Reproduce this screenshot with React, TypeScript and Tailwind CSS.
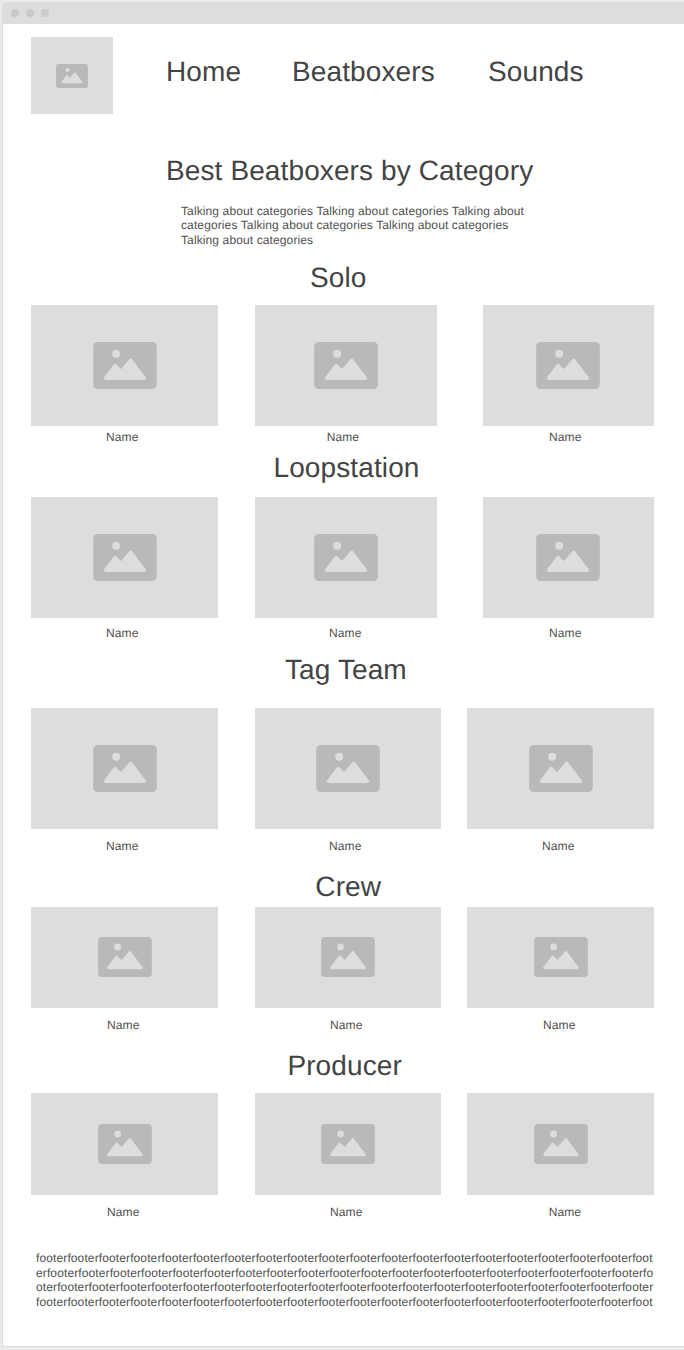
import React from "react";

type Card = { box: string; label: string; icon?: string };
type Section = {
  title: string;
  heading: string;
  row: string;
  icon: string;
  cards: Card[];
};

const sections: Section[] = [
  {
    title: "Solo",
    heading: "mt-[15px] ml-[307px]",
    row: "mt-[11px] h-[121px]",
    icon: "w-16 h-[47px]",
    cards: [
      { box: "ml-[28px] w-[187px]", label: "mt-[4px] pl-[75px]" },
      { box: "ml-[37px] w-[182px]", label: "mt-[4px] pl-[71.7px]" },
      { box: "ml-[46px] w-[171px]", label: "mt-[4px] pl-[66px]", icon: "pr-px" },
    ],
  },
  {
    title: "Loopstation",
    heading: "mt-[8px] ml-[270.5px]",
    row: "mt-[13px] h-[121px]",
    icon: "w-16 h-[47px]",
    cards: [
      { box: "ml-[28px] w-[187px]", label: "mt-[8px] pl-[75px]" },
      { box: "ml-[37px] w-[182px]", label: "mt-[8px] pl-[74px]" },
      { box: "ml-[46px] w-[171px]", label: "mt-[8px] pl-[66px]", icon: "pr-px" },
    ],
  },
  {
    title: "Tag Team",
    heading: "mt-[14px] ml-[282px]",
    row: "mt-[22px] h-[121px]",
    icon: "w-16 h-[47px]",
    cards: [
      { box: "ml-[28px] w-[187px]", label: "mt-[10px] pl-[75px]" },
      { box: "ml-[37px] w-[186px]", label: "mt-[10px] pl-[74px]" },
      { box: "ml-[26px] w-[187px]", label: "mt-[10px] pl-[75px]" },
    ],
  },
  {
    title: "Crew",
    heading: "mt-[18px] ml-[312.3px]",
    row: "mt-[4px] h-[101px] pb-px",
    icon: "w-[54px] h-[40px]",
    cards: [
      { box: "ml-[28px] w-[187px]", label: "mt-[10px] pl-[76px]" },
      { box: "ml-[37px] w-[186px]", label: "mt-[10px] pl-[75px]" },
      { box: "ml-[26px] w-[187px]", label: "mt-[10px] pl-[76px]" },
    ],
  },
  {
    title: "Producer",
    heading: "mt-[18px] ml-[284.4px]",
    row: "mt-[11px] h-[102px]",
    icon: "w-[54px] h-[40px]",
    cards: [
      { box: "ml-[28px] w-[187px]", label: "mt-[10px] pl-[76px]" },
      { box: "ml-[37px] w-[186px]", label: "mt-[10px] pl-[75px]" },
      { box: "ml-[26px] w-[187px]", label: "mt-[10px] pl-[81.7px]" },
    ],
  },
];

function PictureIcon({ className }: { className: string }) {
  return (
    <svg viewBox="0 0 64 47" preserveAspectRatio="none" className={className}>
      <rect x="0.2" width="63.6" height="47" rx="4.5" fill="#b9b9b9" />
      <circle cx="23.2" cy="11.7" r="4" fill="#dddddd" />
      <path
        d="M12.5 36.2 22 23.5 28 29.5 37.7 18.3 51.4 36.2Z"
        fill="#dddddd"
        stroke="#dddddd"
        strokeWidth="3.4"
        strokeLinejoin="round"
      />
    </svg>
  );
}

function SectionBlock({ section }: { section: Section }) {
  return (
    <section className="flex flex-col items-start">
      <h2 className={`text-[28px] leading-8 whitespace-nowrap ${section.heading}`}>{section.title}</h2>
      <div className="flex">
        {section.cards.map((card, i) => (
          <figure key={i} className={`shrink-0 ${card.box}`}>
            <div className={`flex items-center justify-center bg-[#dddddd] ${section.row} ${card.icon ?? ""}`}>
              <PictureIcon className={section.icon} />
            </div>
            <figcaption className={`h-[14px] text-xs leading-[14px] text-[#505050] ${card.label}`}>Name</figcaption>
          </figure>
        ))}
      </div>
    </section>
  );
}

export default function App() {
  return (
    <div className="h-[1350px] w-full overflow-hidden bg-[#ebebeb] pt-[2px] pl-[2px] font-['Liberation_Sans',Arial,sans-serif] tracking-[0.115px] text-[#444444] [text-rendering:geometricPrecision]">
      <div className="h-[1345px] w-full overflow-hidden rounded-tl-[4px] border-b border-l border-[#dcdcdc] bg-white">
        <div className="-ml-px flex h-[22px] items-center gap-[7px] bg-[#dddddd] pl-[9px]">
          <span className="size-2 rounded-full bg-[#cacaca]" />
          <span className="size-2 rounded-full bg-[#cacaca]" />
          <span className="size-2 rounded-full bg-[#cacaca]" />
        </div>
        <header className="flex h-[90px] items-start pt-[13px] pl-[28px]">
          <div className="flex h-[77px] w-[82px] shrink-0 items-center justify-center bg-[#dddddd]">
            <PictureIcon className="h-6 w-8" />
          </div>
          <nav className="flex pt-[19px] text-[28px] leading-8">
            <a className="ml-[53px] w-[126px]">Home</a>
            <a className="w-[196px]">Beatboxers</a>
            <a>Sounds</a>
          </nav>
        </header>
        <h1 className="mt-[41px] ml-[163px] text-[28px] leading-8 whitespace-nowrap">Best Beatboxers by Category</h1>
        <p className="mt-[16.6px] ml-[178px] h-[43.4px] w-[355px] text-xs leading-[14.6px] text-[#505050]">
          Talking about categories Talking about categories Talking about categories Talking about categories Talking
          about categories Talking about categories
        </p>
        {sections.map((s) => (
          <SectionBlock key={s.title} section={s} />
        ))}
        <footer className="mt-[32px] ml-[33px] w-[619px] text-xs leading-[14.6px] break-all text-[#505050]">
          {"footer".repeat(78)}foot
        </footer>
      </div>
    </div>
  );
}
